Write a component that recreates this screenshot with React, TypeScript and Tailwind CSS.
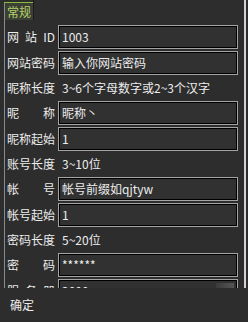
import React from "react";

const font = { fontFamily: '"Noto Sans CJK SC", "Liberation Sans", sans-serif' };

function Label({ text }: { text: string[] }) {
  return (
    <div className="w-[48px] mr-[3px] flex justify-between text-[12px] leading-none text-[#ececec] shrink-0">
      {text.map((t, i) => (
        <span key={i}>{t}</span>
      ))}
    </div>
  );
}

function Field({ label, value, select }: { label: string[]; value: string; select?: boolean }) {
  return (
    <div className="flex items-center h-[24px] shrink-0">
      <Label text={label} />
      <div className="w-[180px] h-full border border-[#a4a4a4]">
        <div className="relative h-full border border-black bg-[#313131] pl-[2px] flex items-center text-[12px] leading-none text-[#ececec]">
          {value}
          {select && (
            <div className="absolute right-[2px] top-[2px] w-[18px] h-[8px] bg-gradient-to-r from-[#3a3a3a] to-[#555555] flex items-end justify-end pr-[2px]">
              <div className="w-0 h-0 border-l-[3px] border-l-transparent border-b-[3px] border-b-[#111]" />
            </div>
          )}
        </div>
      </div>
    </div>
  );
}

function Info({ label, value }: { label: string[]; value: string }) {
  return (
    <div className="flex items-center h-[26px] shrink-0">
      <Label text={label} />
      <div className="pl-[4px] text-[12px] leading-none text-[#ececec]">{value}</div>
    </div>
  );
}

export default function App() {
  return (
    <div className="w-[248px] h-[322px] bg-[#2d2d2d] flex flex-col overflow-hidden" style={font}>
      <div className="h-[288px] flex overflow-hidden">
        <div className="w-[238px] flex flex-col shrink-0">
          <div className="h-[20px] flex shrink-0">
            <div className="ml-[4px] w-[30px] h-[20px] pt-[2px] flex flex-col shrink-0 border-r border-[#1c1c1c]">
              <div className="h-[1px] bg-[#8cbc3c]" />
              <div className="flex-1 bg-[#3b3f36] border-l border-[#8a8a8a] flex items-center justify-center text-[12px] leading-none text-[#b4d266]">
                常规
              </div>
            </div>
          </div>
          <div className="ml-[4px] flex-1 border-l border-[#8a8a8a] pl-[2px] pt-[5px] flex flex-col">
            <Field label={["网", "站", "ID"]} value="1003" />
            <div className="h-[2px] shrink-0" />
            <Field label={["网", "站", "密", "码"]} value="输入你网站密码" />
            <Info label={["昵", "称", "长", "度"]} value="3~6个字母数字或2~3个汉字" />
            <Field label={["昵", "称"]} value="昵称丶" />
            <div className="h-[2px] shrink-0" />
            <Field label={["昵", "称", "起", "始"]} value="1" />
            <Info label={["账", "号", "长", "度"]} value="3~10位" />
            <Field label={["帐", "号"]} value="帐号前缀如qjtyw" />
            <div className="h-[2px] shrink-0" />
            <Field label={["帐", "号", "起", "始"]} value="1" />
            <Info label={["密", "码", "长", "度"]} value="5~20位" />
            <Field label={["密", "码"]} value="******" />
            <div className="h-[2px] shrink-0" />
            <Field label={["服", "务", "器"]} value="2000" select />
          </div>
        </div>
        <div className="flex-1 flex">
          <div className="w-[6px]" />
          <div className="w-[2px] bg-[#d8d0d0]" />
        </div>
      </div>
      <div className="h-[34px] flex items-center pl-[10px] text-[12px] leading-none text-[#ececec] shrink-0">
        确定
      </div>
    </div>
  );
}
